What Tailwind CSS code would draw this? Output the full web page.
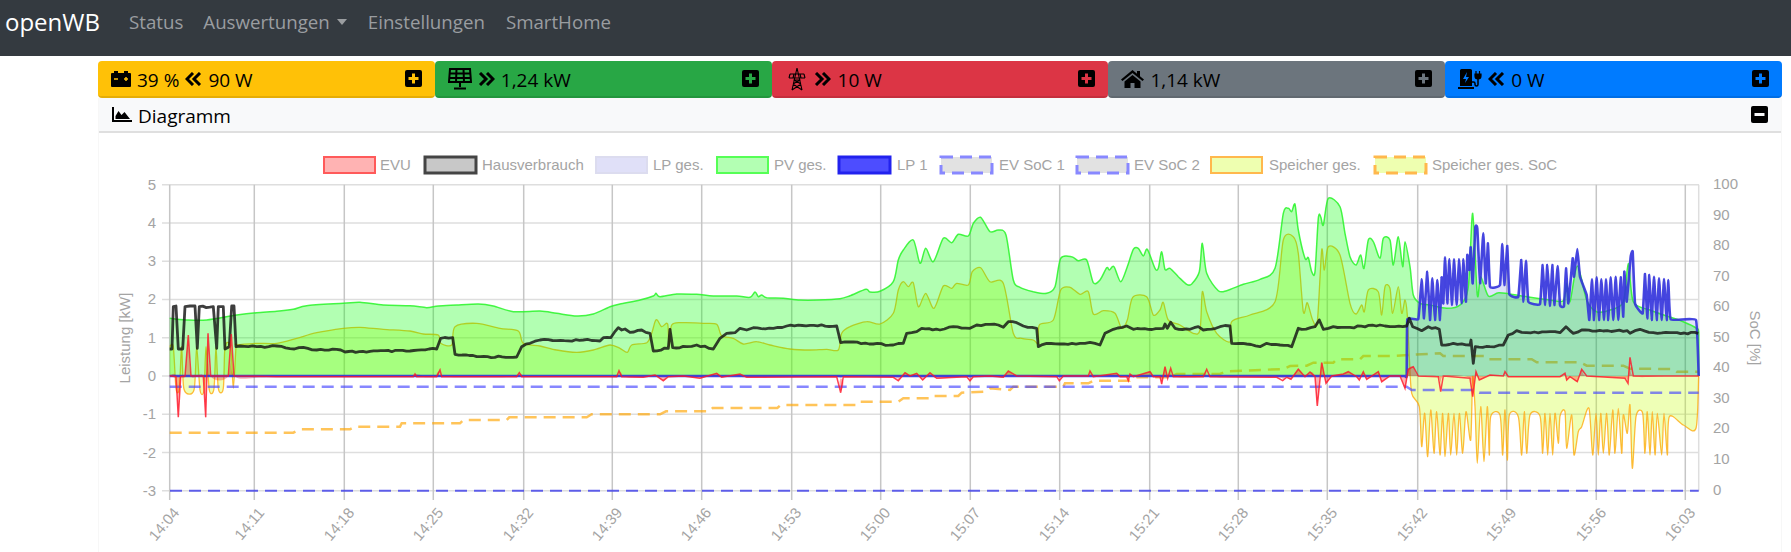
<!DOCTYPE html>
<html lang="de">
<head>
  <meta charset="UTF-8">
  <title>openWB</title>
  <script src="https://cdn.jsdelivr.net/npm/@tailwindcss/browser@4"></script>
</head>
<body class="bg-white h-[552px] overflow-hidden font-['Open_Sans',sans-serif] text-black">

  <!-- Navbar -->
  <nav class="h-14 bg-[#343a40] flex items-center pl-[5px] pb-[12px] text-[18.7px] text-[#9a9da0]">
    <span class="text-white text-[24px] mr-[29px]">openWB</span>
    <span class="mr-[20px]">Status</span>
    <span class="flex items-center mr-[21px]">Auswertungen<span class="ml-[7px] mt-[1px] border-x-[5px] border-x-transparent border-t-[6px] border-t-[#9a9da0]"></span></span>
    <span class="mr-[21px]">Einstellungen</span>
    <span>SmartHome</span>
  </nav>

  <main class="ml-[98px] w-[1684px] mt-[5px]">
    <!-- Power cards -->
    <div class="grid grid-cols-5 text-[19px]">
      <div class="h-[37px] bg-[#ffc107] text-[#ffc107] rounded border-b-2 border-black/10 flex items-center justify-between px-[13px]">
        <div class="flex items-center gap-[6px] text-black">
          <svg width="20" height="16" viewBox="0 0 20 16"><path d="M3 0h4v2H3zM13 0h4v2h-4zM1 2h18a1 1 0 0 1 1 1v12a1 1 0 0 1-1 1H1a1 1 0 0 1-1-1V3a1 1 0 0 1 1-1z"/><path d="M3 8h4M13 8h4M15 6v4" stroke="#ffc107" stroke-width="1.5"/></svg>
          <span class="mt-[4px]">39 %</span>
          <svg width="17" height="14" viewBox="0 0 17 14" fill="none" stroke="black" stroke-width="3"><path d="M8 1 2 7l6 6M15 1 9 7l6 6"/></svg>
          <span class="mt-[4px]">90 W</span>
        </div>
        <svg width="17" height="17" viewBox="0 0 17 17"><rect width="17" height="17" rx="2"/><path d="M8.5 3.5v10M3.5 8.5h10" stroke="currentColor" stroke-width="3"/></svg>
      </div>
      <div class="h-[37px] bg-[#28a745] text-[#28a745] rounded border-b-2 border-black/10 flex items-center justify-between px-[13px]">
        <div class="flex items-center gap-[6px] text-black">
          <svg width="24" height="22" viewBox="0 0 24 22" fill="none" stroke="black" stroke-width="2"><path d="M2 1h20l1 13H1zM1.500 5.500h21M1.500 10h21M8.500 1 8 14M15.500 1l.5 13M12 14v5M6 20.500h12"/></svg>
          <svg width="17" height="14" viewBox="0 0 17 14" fill="none" stroke="black" stroke-width="3"><path d="m2 1 6 6-6 6M9 1l6 6-6 6"/></svg>
          <span class="mt-[4px]">1,24 kW</span>
        </div>
        <svg width="17" height="17" viewBox="0 0 17 17"><rect width="17" height="17" rx="2"/><path d="M8.5 3.5v10M3.5 8.5h10" stroke="currentColor" stroke-width="3"/></svg>
      </div>
      <div class="h-[37px] bg-[#dc3545] text-[#dc3545] rounded border-b-2 border-black/10 flex items-center justify-between px-[13px]">
        <div class="flex items-center gap-[5px] text-black">
          <svg width="24" height="24" viewBox="0 0 24 24" fill="none" stroke="black" stroke-width="1.1"><path d="M12 1 7 23M12 1l5 22M5 7h14M4 11h16M5 7l-1 4M19 7l1 4M9 7l-1 4M15 7l1 4M8.5 13h7M8 17l7-4M16 17 9 13M7 23l9-6M17 23 8 17"/></svg>
          <svg width="17" height="14" viewBox="0 0 17 14" fill="none" stroke="black" stroke-width="3"><path d="m2 1 6 6-6 6M9 1l6 6-6 6"/></svg>
          <span class="ml-[2px] mt-[4px]">10 W</span>
        </div>
        <svg width="17" height="17" viewBox="0 0 17 17"><rect width="17" height="17" rx="2"/><path d="M8.5 3.5v10M3.5 8.5h10" stroke="currentColor" stroke-width="3"/></svg>
      </div>
      <div class="h-[37px] bg-[#6c757d] text-[#6c757d] rounded border-b-2 border-black/10 flex items-center justify-between px-[13px]">
        <div class="flex items-center gap-[6px] text-black">
          <svg width="23" height="18" viewBox="0 0 23 18"><path d="M11.5 0 0 9.5l1.5 1.6L11.5 3l10 8.100 1.500-1.600-4-3.300V1h-3v2.700z"/><path d="M11.500 5 3.500 11.500V18h6v-5h4v5h6v-6.500z"/></svg>
          <span class="mt-[4px]">1,14 kW</span>
        </div>
        <svg width="17" height="17" viewBox="0 0 17 17"><rect width="17" height="17" rx="2"/><path d="M8.5 3.5v10M3.5 8.5h10" stroke="currentColor" stroke-width="3"/></svg>
      </div>
      <div class="h-[37px] bg-[#007bff] text-[#007bff] rounded border-b-2 border-black/10 flex items-center justify-between px-[13px]">
        <div class="flex items-center gap-[6px] text-black">
          <svg width="24" height="20" viewBox="0 0 24 20"><path d="M2 1.500A1.500 1.500 0 0 1 3.500 0h9A1.500 1.500 0 0 1 14 1.500V17H2zM0 18h16v2H0z"/><path d="M9 3 5 10h3l-1 4 4-6H8z" fill="#007bff"/><path d="M14 13h1.500a1.500 1.500 0 0 1 1.500 1.500v1a1.500 1.500 0 0 0 3 0V9" fill="none" stroke="black" stroke-width="1.500"/><path d="M18 2v3M21.500 2v3M17 5h6v2a3 3 0 0 1-6 0z" stroke="black" stroke-width="1.200"/></svg>
          <svg width="17" height="14" viewBox="0 0 17 14" fill="none" stroke="black" stroke-width="3"><path d="M8 1 2 7l6 6M15 1 9 7l6 6"/></svg>
          <span class="mt-[4px]">0 W</span>
        </div>
        <svg width="17" height="17" viewBox="0 0 17 17"><rect width="17" height="17" rx="2"/><path d="M8.5 3.5v10M3.5 8.5h10" stroke="currentColor" stroke-width="3"/></svg>
      </div>
    </div>

    <!-- Diagramm card -->
    <section class="border-x border-black/[0.03]">
      <div class="h-[35px] bg-[#f8f9fa] border-b-2 border-[#dfdfdf] flex items-center justify-between px-[13px] text-[19px]">
        <div class="flex items-center gap-[6px]">
          <svg width="20" height="15" viewBox="0 0 20 15"><path d="M0 0h2v13h18v2H0z"/><path d="M3.500 12V9l3-5 3 4 3-3 5.500 7z"/></svg>
          <span class="mt-[4px]">Diagramm</span>
        </div>
        <svg width="17" height="17" viewBox="0 0 17 17"><rect width="17" height="17" rx="2"/><path d="M3.500 8.500h10" stroke="#f8f9fa" stroke-width="3"/></svg>
      </div>

      <svg width="1682" height="419" viewBox="99 133 1682 419" font-family="'Liberation Sans',Arial,sans-serif" font-size="15" fill="#a4a4a4" class="block">
        <!-- legend -->
        <g stroke-width="2">
          <rect x="324" y="157" width="51" height="16" fill="#ffb3b3" stroke="#ff5a5a"/>
          <rect x="425" y="157" width="51" height="16" fill="#c8c8c8" stroke="#444" stroke-width="3"/>
          <rect x="596" y="157" width="51" height="16" fill="#e0e0f8" stroke="#dcdcef"/>
          <rect x="717" y="157" width="51" height="16" fill="#b3ffb3" stroke="#55ff55"/>
          <rect x="839" y="157" width="51" height="16" fill="#4d4dff" stroke="#2222ee" stroke-width="3"/>
          <rect x="941" y="157" width="51" height="16" fill="#e2e2e2" stroke="#8888ff" stroke-width="3" stroke-dasharray="12 7"/>
          <rect x="1077" y="157" width="51" height="16" fill="#e2e2e2" stroke="#8888ff" stroke-width="3" stroke-dasharray="12 7"/>
          <rect x="1211" y="157" width="51" height="16" fill="#eeffb0" stroke="#ffb84d"/>
          <rect x="1375" y="157" width="51" height="16" fill="#eeffb0" stroke="#ffb84d" stroke-width="3" stroke-dasharray="12 7"/>
        </g>
        <g>
          <text x="380" y="170">EVU</text>
          <text x="482" y="170">Hausverbrauch</text>
          <text x="653" y="170">LP ges.</text>
          <text x="774" y="170">PV ges.</text>
          <text x="897" y="170">LP 1</text>
          <text x="999" y="170">EV SoC 1</text>
          <text x="1134" y="170">EV SoC 2</text>
          <text x="1269" y="170">Speicher ges.</text>
          <text x="1432" y="170">Speicher ges. SoC</text>
        </g>

        <!-- grid -->
        <g stroke="#dedede" stroke-width="1.500">
          <path d="M162 184.700H1699M162 223H1699M162 261.200H1699M162 299.500H1699M162 337.700H1699M162 376H1699M162 414.200H1699M162 452.500H1699M162 490.700H1699"/>
        </g>
        <g stroke="#c6c6c6" stroke-width="1.500">
          <path d="M169.700 184.700V500M254.300 184.700V500M344.300 184.700V500M433.300 184.700V500M523.700 184.700V500M612.300 184.700V500M701.700 184.700V500M791.700 184.700V500M880.700 184.700V500M970.300 184.700V500M1059.700 184.700V500M1149.700 184.700V500M1238.300 184.700V500M1327.300 184.700V500M1417.700 184.700V500M1506.700 184.700V500M1596.300 184.700V500M1685.300 184.700V500"/>
        </g>
        <path d="M1698.700 184.700V490.700" stroke="#dedede" stroke-width="1.500"/>

        <!-- data, paths are filled in by the script below -->
        <path id="fill-store" fill="rgb(200,255,13)" fill-opacity="0.3"/>
        <path id="line-store" fill="none" stroke="rgb(255,165,0)" stroke-opacity="0.75" stroke-width="1.300"/>
        <path id="line-soc" fill="none" stroke="rgb(255,165,0)" stroke-opacity="0.65" stroke-width="2.500" stroke-dasharray="12 7"/>
        <path id="fill-pv" fill="rgb(0,255,0)" fill-opacity="0.3"/>
        <path id="fill-lp" fill="rgb(47,60,213)" fill-opacity="0.15"/>
        <path id="fill-evu" fill="rgb(255,0,0)" fill-opacity="0.3"/>
        <path id="line-pv" fill="none" stroke="rgb(40,245,40)" stroke-opacity="0.85" stroke-width="1.500"/>
        <path id="line-lp" fill="none" stroke="rgb(50,50,220)" stroke-opacity="0.9" stroke-width="2.600" stroke-linejoin="round"/>
        <path id="line-ev1" fill="none" stroke="rgb(70,70,255)" stroke-opacity="0.65" stroke-width="2.500" stroke-dasharray="12 7"/>
        <path d="M170 490.700H1698.700" fill="none" stroke="rgb(60,60,235)" stroke-opacity="0.8" stroke-width="2" stroke-dasharray="12 7"/>
        <path id="line-house" fill="none" stroke="rgb(20,20,20)" stroke-opacity="0.82" stroke-width="2.800" stroke-linejoin="round"/>
        <path id="line-evu" fill="none" stroke="rgb(255,20,40)" stroke-opacity="0.8" stroke-width="1.500"/>

        <!-- left axis -->
        <g text-anchor="end">
          <text x="156" y="190">5</text>
          <text x="156" y="228">4</text>
          <text x="156" y="266">3</text>
          <text x="156" y="304">2</text>
          <text x="156" y="343">1</text>
          <text x="156" y="381">0</text>
          <text x="156" y="419">-1</text>
          <text x="156" y="458">-2</text>
          <text x="156" y="496">-3</text>
        </g>
        <text transform="translate(130 338) rotate(-90)" text-anchor="middle">Leistung [kW]</text>

        <!-- right axis -->
        <g>
          <text x="1713" y="189">100</text>
          <text x="1713" y="220">90</text>
          <text x="1713" y="250">80</text>
          <text x="1713" y="281">70</text>
          <text x="1713" y="311">60</text>
          <text x="1713" y="342">50</text>
          <text x="1713" y="372">40</text>
          <text x="1713" y="403">30</text>
          <text x="1713" y="433">20</text>
          <text x="1713" y="464">10</text>
          <text x="1713" y="495">0</text>
        </g>
        <text transform="translate(1750 338) rotate(90)" text-anchor="middle">SoC [%]</text>

        <!-- time axis -->
        <g text-anchor="end">
          <text transform="translate(180 513) rotate(-50)">14:04</text>
          <text transform="translate(265 513) rotate(-50)">14:11</text>
          <text transform="translate(355 513) rotate(-50)">14:18</text>
          <text transform="translate(444 513) rotate(-50)">14:25</text>
          <text transform="translate(534 513) rotate(-50)">14:32</text>
          <text transform="translate(623 513) rotate(-50)">14:39</text>
          <text transform="translate(712 513) rotate(-50)">14:46</text>
          <text transform="translate(802 513) rotate(-50)">14:53</text>
          <text transform="translate(891 513) rotate(-50)">15:00</text>
          <text transform="translate(981 513) rotate(-50)">15:07</text>
          <text transform="translate(1070 513) rotate(-50)">15:14</text>
          <text transform="translate(1160 513) rotate(-50)">15:21</text>
          <text transform="translate(1249 513) rotate(-50)">15:28</text>
          <text transform="translate(1338 513) rotate(-50)">15:35</text>
          <text transform="translate(1428 513) rotate(-50)">15:42</text>
          <text transform="translate(1517 513) rotate(-50)">15:49</text>
          <text transform="translate(1607 513) rotate(-50)">15:56</text>
          <text transform="translate(1696 513) rotate(-50)">16:03</text>
        </g>
      </svg>
    </section>
  </main>

  <script>
    // traced points, one string per x offset of the chart
    const OFFSETS = [90, 540, 990, 1390];
    const Y0 = 376;

    function toPoints(parts) {
      const points = [];
      parts.forEach((part, i) => {
        part.trim().split(/\s+/).forEach(p => {
          const [x, y] = p.split(',').map(Number);
          points.push([OFFSETS[i] + x / 3, 170 + y / 3]);
        });
      });
      return points;
    }
    const fmt = n => n.toFixed(1);
    const line = pts => 'M' + pts.map(p => fmt(p[0]) + ' ' + fmt(p[1])).join('L');

    // catmull-rom to bezier, chart.js lines have a slight tension too
    function curve(pts, k = 0.14) {
      let d = 'M' + fmt(pts[0][0]) + ' ' + fmt(pts[0][1]);
      for (let i = 0; i < pts.length - 1; i++) {
        const p0 = pts[Math.max(i - 1, 0)], p1 = pts[i], p2 = pts[i + 1], p3 = pts[Math.min(i + 2, pts.length - 1)];
        d += 'C' + [p1[0] + (p2[0] - p0[0]) * k, p1[1] + (p2[1] - p0[1]) * k,
                    p2[0] - (p3[0] - p1[0]) * k, p2[1] - (p3[1] - p1[1]) * k,
                    p2[0], p2[1]].map(fmt).join(' ');
      }
      return d;
    }
    const area = (pts, k) => curve(pts, k) + 'L' + fmt(pts[pts.length - 1][0]) + ' ' + Y0 + 'L' + fmt(pts[0][0]) + ' ' + Y0 + 'Z';
    const setD = (id, d) => document.getElementById(id).setAttribute('d', d);

    // the house reading is noisy, break long stretches up with a small wobble
    function wobble(pts) {
      const out = [];
      let n = 0;
      for (let i = 0; i < pts.length - 1; i++) {
        const [x1, y1] = pts[i], [x2, y2] = pts[i + 1];
        const steps = Math.max(1, Math.floor((x2 - x1) / 3.5));
        for (let s = 0; s < steps; s++) {
          const t = s / steps;
          const r = Math.sin(++n * 12.9898) * 43758.5453;
          const jitter = s === 0 ? 0 : ((r - Math.floor(r)) - 0.5) * 1.8;
          out.push([x1 + (x2 - x1) * t, y1 + (y2 - y1) * t + jitter]);
        }
      }
      out.push(pts[pts.length - 1]);
      return out;
    }

    const pv = toPoints([
      '239,445 290,450 350,450 440,435 500,428 560,424 610,418 650,407 760,400 810,397 880,405 960,407 1010,413 1045,408 1100,405 1165,402 1210,408 1270,425 1350,423',
      '50,430 110,438 160,432 210,410 240,402 300,390 340,378 348,370 360,380 410,372 470,373 520,378 590,378 630,382 645,366 655,380 665,375 680,383 730,385 780,390 830,390 900,386 930,377 978,358 990,366 1020,364 1060,335 1075,270 1090,240 1120,210 1140,280 1157,235 1180,275 1210,205 1235,218 1255,193 1285,198 1300,160 1322,142 1350,185',
      '25,180 48,195 70,330 90,352 130,365 170,370 195,350 212,265 245,260 265,272 290,270 310,338 330,330 350,293 358,300 372,290 392,335 412,290 430,238 445,235 460,258 472,238 495,295 505,295 515,245 525,298 540,295 565,320 590,343 605,342 628,305 637,220 650,310 685,362 710,362 760,343 810,328 855,295 880,130 895,115 905,125 915,103 925,180 945,265 955,263 965,305 975,305 985,145 992,140 1000,165 1015,85 1050,110 1065,190 1080,260 1098,285 1112,255 1122,295 1135,210 1150,215 1170,265 1180,205 1200,210',
      '10,285 25,200 38,290 45,215 60,290 70,375 90,400 120,405 170,415 210,405 235,350 248,130 262,375 272,320 295,378 325,368 360,372 420,382 480,390 520,392 530,340 540,395 562,288 590,390 620,425 660,420 700,395 715,280 730,395 780,420 830,438 880,455 920,475 926,490 926,618'
    ]);
    const store = toPoints([
      '239,530 250,530 258,655 268,655 275,530 282,658 312,660 320,530 330,660 342,660 348,530 358,660 372,655 378,530 385,655 400,655 405,530 422,530 430,655 438,530 440,525 500,520 560,520 620,505 680,488 760,475 810,472 880,478 960,483 1000,492 1045,495 1052,520 1085,525 1095,470 1160,460 1230,475 1285,483 1300,520 1350,528',
      '50,540 110,547 160,540 210,525 240,535 262,547 275,525 320,518 335,490 345,455 352,450 365,470 383,462 387,530 395,465 430,458 490,460 530,463 545,497 580,505 610,522 650,515 690,525 750,537 810,540 860,538 895,540 905,490 930,470 980,455 1020,462 1060,430 1075,360 1090,335 1105,350 1120,338 1135,410 1157,370 1182,415 1210,348 1235,355 1250,340 1285,345 1297,305 1322,293 1350,335',
      '40,340 70,490 95,505 130,510 145,520 148,465 190,450 212,360 240,352 270,373 295,365 310,432 340,422 375,430 395,475 412,450 428,382 470,380 490,435 510,420 520,397 535,450 570,465 610,490 630,480 637,365 650,425 680,490 720,515 725,455 780,435 855,395 880,210 910,200 925,250 940,425 952,398 968,450 982,455 995,240 1003,300 1015,230 1050,255 1080,400 1098,432 1115,405 1123,425 1135,360 1165,365 1175,435 1185,350 1200,355',
      '8,430 25,350 35,430 45,390 52,435 58,560 65,670 88,710 95,830 104,730 113,860 122,720 132,850 140,725 150,855 158,730 165,860 175,730 182,855 192,730 200,855 208,730 218,850 228,725 242,810 248,620 255,710 262,880 272,710 282,875 292,710 298,855 302,740 330,735 338,855 345,720 352,870 358,735 385,740 395,855 403,725 410,850 420,735 450,738 458,850 465,730 473,855 480,730 488,855 495,730 505,820 510,738 525,725 530,835 545,735 552,855 565,785 575,770 597,715 608,855 618,730 625,855 632,730 640,850 650,730 658,855 668,720 675,850 685,715 695,850 700,735 712,790 720,705 727,895 738,740 758,730 765,850 772,725 780,855 787,725 795,855 802,730 815,855 822,730 832,855 838,740 880,765 918,775 926,618'
    ]);
    const house = toPoints([
      '239,537 246,537 250,410 258,408 265,537 278,537 285,410 315,408 322,535 328,410 370,410 380,535 385,410 400,410 405,537 418,530 425,408 432,408 438,530 500,530 560,528 600,536 640,532 680,540 740,538 765,546 840,544 960,543 1040,537 1052,505 1088,503 1095,553 1160,560 1280,561 1295,530 1320,520 1350,510',
      '50,512 130,510 180,513 190,503 212,503 235,473 245,480 255,477 270,487 305,480 330,490 340,543 385,535 390,478 398,533 440,530 470,525 520,537 540,505 560,490 585,488 600,475 620,480 640,473 700,475 740,468 810,466 890,468 902,518 940,516 1000,522 1060,525 1090,520 1100,490 1130,485 1145,475 1200,480 1240,470 1290,475 1310,465 1350,463',
      '25,465 40,472 55,455 80,458 100,468 140,475 145,530 170,520 210,522 270,520 300,517 330,525 345,490 370,478 410,468 430,478 520,475 525,462 532,475 542,457 555,475 600,478 625,470 640,480 690,470 720,468 725,520 770,522 810,530 830,520 870,525 905,530 925,475 935,478 975,470 988,450 1000,478 1030,470 1080,472 1170,465 1200,470',
      '15,470 50,468 58,445 68,470 95,482 115,470 148,478 155,525 190,520 240,525 243,510 250,580 256,530 300,530 340,525 355,495 380,482 410,488 480,485 510,488 528,470 550,490 575,480 640,483 712,482 720,490 750,478 790,488 840,488 925,490'
    ]);
    const evu = toPoints([
      '239,617 258,620 265,742 272,620 285,618 295,495 303,618 340,618 347,742 354,490 362,618 415,618 424,492 432,618 560,620 970,620 975,612 980,620 1040,620 1050,600 1055,620 1280,620 1288,608 1295,620 1350,620',
      '230,620 237,602 245,620 310,622 345,615 370,632 385,620 430,618 480,625 530,610 545,622 600,612 620,622 890,620 902,668 910,620 1060,622 1075,632 1095,608 1110,618 1130,610 1148,630 1170,608 1190,625 1280,620 1290,632 1300,620 1350,618',
      '40,622 55,603 80,618 200,620 208,632 220,618 295,618 300,603 310,620 380,610 390,620 410,620 415,632 420,612 430,620 480,605 490,620 510,620 515,642 525,590 533,625 542,595 550,620 640,620 650,598 660,620 860,622 878,632 890,622 903,628 925,598 945,620 960,606 975,620 982,708 995,578 1008,640 1025,618 1060,612 1075,605 1100,620 1108,630 1120,605 1130,628 1165,605 1175,635 1200,618',
      '30,618 45,655 55,598 70,590 85,618 145,620 152,665 160,618 240,625 248,680 258,605 268,630 300,615 340,618 345,605 355,620 510,620 525,610 530,630 540,620 562,635 575,598 590,618 705,625 714,640 720,562 730,618 830,618 926,618'
    ]);
    // the charge point stays on the zero line until the last section
    const lp = toPoints([
      '239,618',
      '0,618',
      '0,618',
      '0,618 44,618 50,618 52,448 85,447 95,328 102,445 112,305 120,450 127,325 135,450 142,330 150,450 155,322 160,400 165,262 172,400 178,268 186,405 192,268 200,405 207,268 215,400 220,268 228,395 232,255 238,300 242,232 248,340 256,172 262,175 270,340 280,190 287,340 294,220 300,350 330,345 337,222 343,345 352,228 358,372 385,380 394,270 400,395 408,272 415,395 450,402 458,285 465,405 472,285 480,408 487,285 493,405 503,288 510,405 522,408 528,295 535,400 548,265 552,320 562,237 570,320 590,375 598,450 606,328 612,450 620,322 627,450 634,328 642,450 648,328 655,450 662,322 670,450 677,320 685,450 692,322 700,440 703,305 710,395 722,260 728,245 735,400 758,430 765,312 772,445 778,315 785,450 792,320 800,450 807,325 815,450 822,327 830,450 835,330 842,448 918,450 926,618'
    ]);
    const soc = toPoints([
      '239,788 610,788 630,778 780,778 795,770 930,770 935,760 1110,760 1120,750 1250,750 1258,742 1350,742',
      '140,742 155,733 360,733 378,724 510,724 518,714 712,714 722,705 955,705 962,695 1075,695 1090,685 1172,685 1178,678 1255,678 1265,668 1335,665 1350,655',
      '60,660 70,650 220,650 225,640 295,640 310,632 420,632 440,622 540,622 560,612 690,612 710,604 880,597 900,588 950,587 970,578 1030,578 1040,568 1110,568 1120,558 1200,558',
      '150,550 160,558 285,558 295,568 425,568 440,577 570,577 590,587 700,587 720,596 850,597 860,605 926,605'
    ]);
    const ev1 = toPoints(['239,650', '0,650', '0,650', '50,650 65,660 248,660 268,668 926,668']);

    setD('fill-store', area(store));
    setD('fill-pv', area(pv));
    setD('fill-lp', area(lp, 0.05));
    setD('fill-evu', area(evu));
    setD('line-store', curve(store));
    setD('line-pv', curve(pv));
    setD('line-lp', curve(lp, 0.05));
    setD('line-soc', line(soc));
    setD('line-ev1', line(ev1));
    setD('line-house', line(wobble(house)));
    setD('line-evu', line(evu));
  </script>
</body>
</html>
